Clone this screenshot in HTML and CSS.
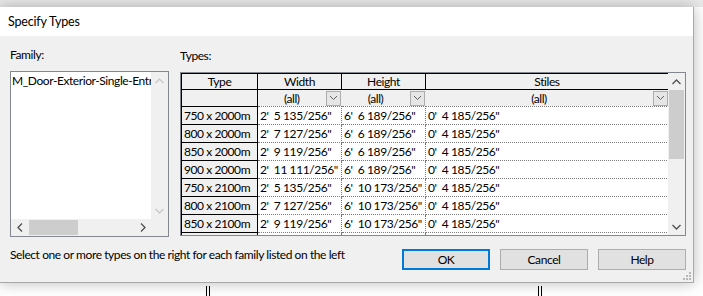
FILE: index.html
```html
<!DOCTYPE html>
<html>
<head>
<meta charset="utf-8">
<link rel="stylesheet" href="styles.css">
</head>
<body>
<div class="screen">
  <div class="dialog">
    <div class="titlebar">Specify Types</div>
    <div class="dlg-body">
      <div class="panes">
        <div class="family">
          <div class="label">Family:</div>
          <div class="listbox">
            <div class="lb-main">
              <div class="lb-content">
                <div class="lb-item">M_Door-Exterior-Single-Entry-Half Flat Glass-Wood_Clad</div>
              </div>
              <div class="vscroll">
                <div class="sb-btn"><svg width="9" height="6" viewBox="0 0 9 6"><polyline points="0.5,5 4.5,1 8.5,5" fill="none" stroke="#c5c5c5" stroke-width="1.2"/></svg></div>
                <div class="sb-track"></div>
                <div class="sb-btn"><svg width="9" height="6" viewBox="0 0 9 6"><polyline points="0.5,1 4.5,5 8.5,1" fill="none" stroke="#c5c5c5" stroke-width="1.2"/></svg></div>
              </div>
            </div>
            <div class="hscroll">
              <div class="sb-hbtn"><svg width="6" height="9" viewBox="0 0 6 9"><polyline points="5,0.5 1,4.5 5,8.5" fill="none" stroke="#505050" stroke-width="1.3"/></svg></div>
              <div class="sb-htrack"><div class="sb-hthumb"></div></div>
              <div class="sb-hbtn"><svg width="6" height="9" viewBox="0 0 6 9"><polyline points="1,0.5 5,4.5 1,8.5" fill="none" stroke="#505050" stroke-width="1.3"/></svg></div>
              <div class="sb-corner"></div>
            </div>
          </div>
        </div>
        <div class="types">
          <div class="label types-label">Types:</div>
          <div class="grid">
            <div class="grid-view">
              <table class="gtable">
                <colgroup>
                  <col class="c-type"><col class="c-w"><col class="c-h"><col class="c-s">
                </colgroup>
                <thead>
                  <tr class="hrow"><th>Type</th><th>Width</th><th>Height</th><th>Stiles</th></tr>
                </thead>
                <tbody>
                  <tr class="frow">
                    <td class="rh"></td>
                    <td class="fcell"><div class="filter"><span class="fval">(all)</span><span class="dd"><svg width="9" height="6" viewBox="0 0 9 6"><polyline points="1,1 4.5,4.5 8,1" fill="none" stroke="#606060" stroke-width="1"/></svg></span></div></td>
                    <td class="fcell"><div class="filter"><span class="fval">(all)</span><span class="dd"><svg width="9" height="6" viewBox="0 0 9 6"><polyline points="1,1 4.5,4.5 8,1" fill="none" stroke="#606060" stroke-width="1"/></svg></span></div></td>
                    <td class="fcell"><div class="filter"><span class="fval">(all)</span><span class="dd"><svg width="9" height="6" viewBox="0 0 9 6"><polyline points="1,1 4.5,4.5 8,1" fill="none" stroke="#606060" stroke-width="1"/></svg></span></div></td>
                  </tr>
                  <tr><td class="rh">750 x 2000m</td><td>2'  5 135/256"</td><td>6'  6 189/256"</td><td>0'  4 185/256"</td></tr>
                  <tr><td class="rh">800 x 2000m</td><td>2'  7 127/256"</td><td>6'  6 189/256"</td><td>0'  4 185/256"</td></tr>
                  <tr><td class="rh">850 x 2000m</td><td>2'  9 119/256"</td><td>6'  6 189/256"</td><td>0'  4 185/256"</td></tr>
                  <tr><td class="rh">900 x 2000m</td><td>2'  11 111/256"</td><td>6'  6 189/256"</td><td>0'  4 185/256"</td></tr>
                  <tr><td class="rh">750 x 2100m</td><td>2'  5 135/256"</td><td>6'  10 173/256"</td><td>0'  4 185/256"</td></tr>
                  <tr><td class="rh">800 x 2100m</td><td>2'  7 127/256"</td><td>6'  10 173/256"</td><td>0'  4 185/256"</td></tr>
                  <tr><td class="rh">850 x 2100m</td><td>2'  9 119/256"</td><td>6'  10 173/256"</td><td>0'  4 185/256"</td></tr>
                  <tr><td class="rh">900 x 2100m</td><td>2'  11 111/256"</td><td>6'  10 173/256"</td><td>0'  4 185/256"</td></tr>
                </tbody>
              </table>
            </div>
            <div class="vscroll gscroll">
              <div class="sb-btn"><svg width="9" height="6" viewBox="0 0 9 6"><polyline points="0.5,5 4.5,1 8.5,5" fill="none" stroke="#505050" stroke-width="1.3"/></svg></div>
              <div class="sb-track"><div class="sb-vthumb"></div></div>
              <div class="sb-btn"><svg width="9" height="6" viewBox="0 0 9 6"><polyline points="0.5,1 4.5,5 8.5,1" fill="none" stroke="#505050" stroke-width="1.3"/></svg></div>
            </div>
          </div>
        </div>
      </div>
      <div class="footer">
        <div class="hint">Select one or more types on the right for each family listed on the left</div>
        <div class="buttons">
          <div class="btn default">OK</div>
          <div class="btn">Cancel</div>
          <div class="btn">Help</div>
        </div>
      </div>
      <svg class="grip" width="8" height="8" viewBox="0 0 8 8">
        <rect x="6" y="0" width="2" height="2" fill="#b8b8b8"/>
        <rect x="3" y="3" width="2" height="2" fill="#b8b8b8"/>
        <rect x="6" y="3" width="2" height="2" fill="#b8b8b8"/>
        <rect x="0" y="6" width="2" height="2" fill="#b8b8b8"/>
        <rect x="3" y="6" width="2" height="2" fill="#b8b8b8"/>
        <rect x="6" y="6" width="2" height="2" fill="#b8b8b8"/>
      </svg>
    </div>
  </div>
  <div class="backdrop">
    <div class="wall wall-a"><span class="ln"></span><span class="ln"></span></div>
    <div class="wall wall-b"><span class="ln"></span><span class="ln"></span></div>
  </div>
</div>
</body>
</html>
```

FILE: styles.css
```css
* { box-sizing: border-box; }
html, body { margin: 0; padding: 0; }
body {
  width: 703px;
  height: 296px;
  overflow: hidden;
  background: #ffffff;
  font-family: Lato, "Noto Sans", sans-serif;
  font-size: 12px;
  letter-spacing: -0.42px;
  color: #000;
}
.screen {
  width: 703px;
  height: 296px;
  overflow: hidden;
  background: linear-gradient(#e9e9e9 0, #e9e9e9 7px, #ffffff 7px);
  padding-top: 7px;
}
.dialog {
  width: 695px;
  margin-left: -1px;
  border: 1px solid #a9a9a9;
  border-top: 0;
  background: #f0f0f0;
  box-shadow: 0 0 14px rgba(0,0,0,0.28);
  position: relative;
}
.titlebar {
  height: 29px;
  line-height: 29px;
  background: #fff;
  padding-left: 8px;
  font-size: 12.5px;
  letter-spacing: -0.2px;
}
.dlg-body {
  padding: 11px 7px 12px 10px;
  position: relative;
}
.panes {
  display: flex;
  gap: 11px;
  align-items: flex-start;
}
.label {
  height: 16px;
  line-height: 16px;
  margin-bottom: 8px;
}
.types-label { padding-top: 1px; height: 17px; }
.family { width: 159px; }
.listbox {
  width: 159px;
  height: 166px;
  border: 1px solid #828790;
  background: #fff;
  display: flex;
  flex-direction: column;
}
.lb-main { flex: 1; display: flex; min-height: 0; }
.lb-content { flex: 1; overflow: hidden; padding-top: 1px; }
.lb-item {
  white-space: nowrap;
  line-height: 16px;
  padding-left: 1px;
}
.vscroll {
  width: 17px;
  background: #f0f0f0;
  display: flex;
  flex-direction: column;
}
.sb-btn {
  height: 17px;
  display: flex;
  align-items: center;
  justify-content: center;
}
.sb-track { flex: 1; position: relative; }
.hscroll {
  height: 17px;
  background: #f0f0f0;
  display: flex;
}
.sb-hbtn {
  width: 17px;
  display: flex;
  align-items: center;
  justify-content: center;
}
.sb-htrack { flex: 1; padding: 1px 0; }
.sb-hthumb {
  width: 49px;
  height: 15px;
  margin-left: 1px;
  background: #cdcdcd;
}
.sb-corner { width: 17px; }

.types { width: 506px; }
.grid {
  width: 506px;
  height: 164px;
  border: 1px solid #828790;
  background: #fff;
  display: flex;
  overflow: hidden;
}
.grid-view { width: 487px; overflow: hidden; }
.gtable {
  border-collapse: collapse;
  table-layout: fixed;
  width: 487px;
}
.c-type { width: 76px; }
.c-w { width: 84px; }
.c-h { width: 84px; }
.c-s { width: 243px; }
.gtable th, .gtable td {
  padding: 0 0 0 2px;
  height: 18px;
  line-height: 16px;
  white-space: pre;
  overflow: hidden;
  font-weight: normal;
}
.gtable td {
  border: 1px dotted #7a7a7a;
  background: #fff;
}
.gtable th {
  height: 16px;
  line-height: 15px;
  border: 1px solid #000;
  background: #f0f0f0;
  text-align: center;
  padding: 0;
}
.gtable td.rh {
  border: 1px solid #000;
  background: #f0f0f0;
}
.frow td {
  height: 16px;
  line-height: 15px;
}
.frow td.fcell {
  background: #f0f0f0;
  border: 0;
  padding: 0;
}
.filter {
  display: flex;
  align-items: center;
  height: 16px;
  padding-right: 1px;
}
.fval { flex: 1; text-align: center; line-height: 15px; }
.dd {
  width: 15px;
  height: 15px;
  border: 1px solid #adadad;
  background: #e6e6e6;
  display: flex;
  align-items: center;
  justify-content: center;
}
.gscroll { width: 17px; }
.gscroll .sb-track { padding: 0 1px; }
.sb-vthumb {
  height: 69px;
  background: #cdcdcd;
}

.footer {
  display: flex;
  align-items: flex-start;
  margin-top: 10px;
}
.hint {
  line-height: 16px;
  flex: 1;
}
.buttons {
  display: flex;
  gap: 10px;
  margin-top: 2px;
}
.btn {
  width: 88px;
  height: 21px;
  border: 1px solid #adadad;
  background: #e1e1e1;
  text-align: center;
  line-height: 19px;
}
.btn.default {
  border: 2px solid #0078d7;
  line-height: 17px;
}
.grip {
  position: absolute;
  right: 2px;
  bottom: 2px;
}
.backdrop {
  height: 20px;
  display: flex;
  padding-top: 3px;
}
.wall {
  display: flex;
  gap: 2px;
  height: 16px;
}
.wall-a { margin-left: 206px; }
.wall-b { margin-left: 328px; }
.ln { width: 1px; background: #000; }
```
